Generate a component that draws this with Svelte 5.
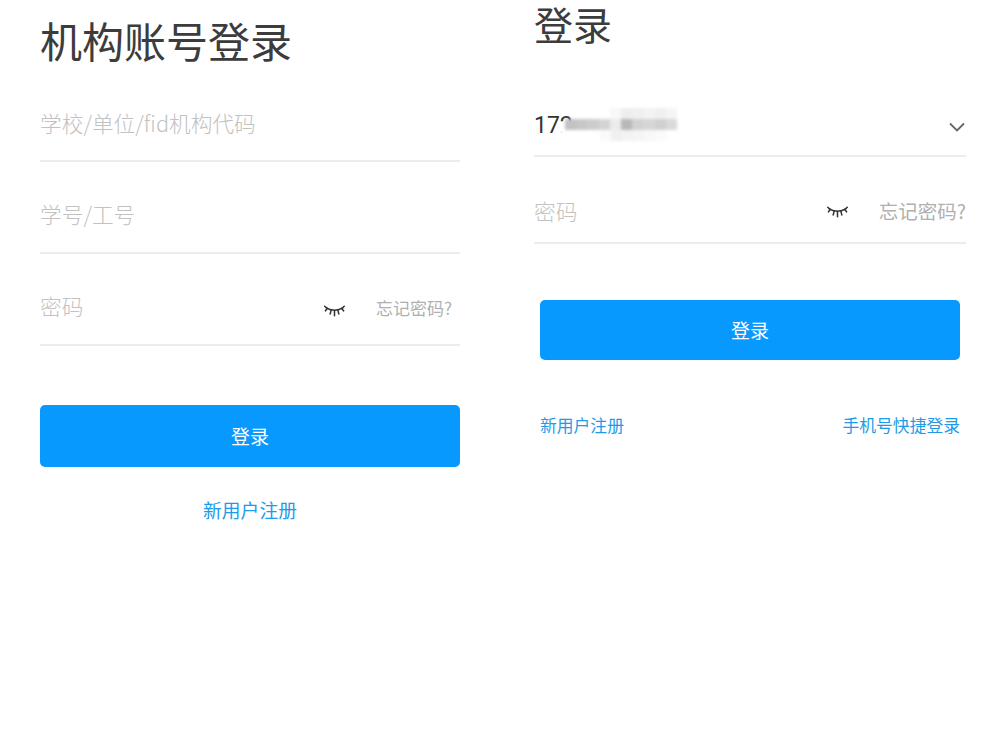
<script>
	const cells = ['#c2c2c2', '#c7c7c7', '#cccccc', '#d4d4d4', '#ececec', '#b8b8b8', '#d2d2d2', '#d6d6d6', '#d0d0d0', '#dadada'];
	const upper = ['#f8f8f8', '#eeeeee', '#f0f0f0', '#f3f3f3', '#efefef', '#f5f5f5'];
	const lower = ['#fafafa', '#f0f0f0', '#f3f3f3', '#f5f5f5', '#f8f8f8', '#fbfbfb'];
</script>

{#snippet eye()}
	<svg class="eye" viewBox="0 0 22 13" width="21" height="13" fill="none" stroke="#333" stroke-width="1.600" stroke-linecap="round">
		<path d="M2 2.500c5 3.500 13 3.500 18 0" />
		<path d="M.8 1 3.500 3.400 1.500 5.800M21.200 1l-2.700 2.400 2 2.400M7.500 5 6.500 9M14.500 5l1 4M11 5.500V11" />
	</svg>
{/snippet}

<main class="page">
	<section class="panel left">
		<h1>机构账号登录</h1>
		<div class="field"><span class="placeholder">学校/单位/fid机构代码</span></div>
		<div class="field"><span class="placeholder">学号/工号</span></div>
		<div class="field">
			<span class="placeholder">密码</span>
			{@render eye()}
			<span class="forgot">忘记密码?</span>
		</div>
		<button class="submit">登录</button>
		<a class="register" href="#register">新用户注册</a>
	</section>

	<section class="panel right">
		<h1>登录</h1>
		<div class="field">
			<span class="value">172</span>
			<div class="smudge">
				<div class="smudge-row faint up">
					{#each upper as c}<i style="background:{c}"></i>{/each}
				</div>
				<div class="smudge-row">
					{#each cells as c}<i style="background:{c}"></i>{/each}
				</div>
				<div class="smudge-row faint down">
					{#each lower as c}<i style="background:{c}"></i>{/each}
				</div>
			</div>
			<svg class="chevron" viewBox="0 0 16 10" width="16" height="10" fill="none" stroke="#666" stroke-width="1.800">
				<path d="M1 1.500 8 8.500 15 1.500" />
			</svg>
		</div>
		<div class="field">
			<span class="placeholder">密码</span>
			{@render eye()}
			<span class="forgot">忘记密码?</span>
		</div>
		<button class="submit">登录</button>
		<div class="links">
			<a href="#register">新用户注册</a>
			<a href="#phone">手机号快捷登录</a>
		</div>
	</section>
</main>

<style>
	:global(body) {
		background: #fff;
		font-family: "Noto Sans CJK SC", "Noto Sans", sans-serif;
	}

	.page {
		display: flex;
		height: 750px;
		padding-left: 40px;
		gap: 74px;
		box-sizing: border-box;
	}

	.panel {
		display: flex;
		flex-direction: column;
	}

	.left {
		width: 420px;
		padding-top: 12px;
	}

	.right {
		width: 432px;
	}

	h1 {
		margin: 0;
		font-weight: 400;
		color: #3c3c3c;
	}

	.left h1 {
		font-size: 42px;
		line-height: 56px;
		margin-bottom: 3px;
	}

	.right h1 {
		font-size: 39px;
		line-height: 46px;
		margin-bottom: 24px;
	}

	.field {
		position: relative;
		display: flex;
		align-items: center;
		box-sizing: border-box;
		border-bottom: 2px solid #ececec;
	}

	.left .field {
		height: 92px;
		padding-top: 13px;
	}

	.left .field:nth-of-type(1) {
		height: 91px;
	}

	.right .field {
		height: 87px;
		padding-top: 22px;
	}

	.placeholder {
		flex: 1;
		font-size: 21.700px;
		font-weight: 300;
		color: #c2c2c2;
	}

	.value {
		flex: 1;
		margin-top: 3px;
		font-family: Roboto, sans-serif;
		font-size: 23px;
		color: #333;
	}

	.eye {
		flex-shrink: 0;
	}

	.left .eye {
		margin: 11px 31px 0 0;
	}

	.right .eye {
		margin: 3px 31px 0 0;
	}

	.forgot {
		color: #b0b0b0;
	}

	.left .forgot {
		font-size: 17px;
		margin: 3px 8px 0 0;
	}

	.right .forgot {
		font-size: 19.500px;
	}

	.chevron {
		margin: 7px 1px 0 0;
	}

	.smudge {
		position: absolute;
		left: 31px;
		top: 38px;
		width: 112px;
		filter: blur(1.500px);
	}

	.smudge::before {
		content: "";
		position: absolute;
		left: -6px;
		top: 9px;
		width: 60px;
		height: 26px;
		border-radius: 50%;
		background: #fff;
	}

	.smudge-row {
		position: relative;
		display: flex;
	}

	.smudge-row i {
		width: 11.200px;
		height: 11px;
	}

	.faint.up {
		margin-left: 45px;
	}

	.faint.down {
		margin-left: 35px;
	}

	.submit {
		border: 0;
		padding: 0 0 2px;
		color: #fff;
		background: #0899ff;
		font-family: inherit;
		font-size: 19px;
		border-radius: 5px;
	}

	.left .submit {
		height: 62px;
		margin-top: 59px;
	}

	.right .submit {
		height: 60px;
		margin: 56px 6px 0;
	}

	a {
		color: #1e9be8;
		text-decoration: none;
	}

	.register {
		align-self: center;
		margin-top: 29px;
		font-size: 18.800px;
		line-height: 28px;
	}

	.links {
		display: flex;
		justify-content: space-between;
		margin: 52px 6px 0;
		font-size: 16.800px;
		line-height: 26px;
	}
</style>
